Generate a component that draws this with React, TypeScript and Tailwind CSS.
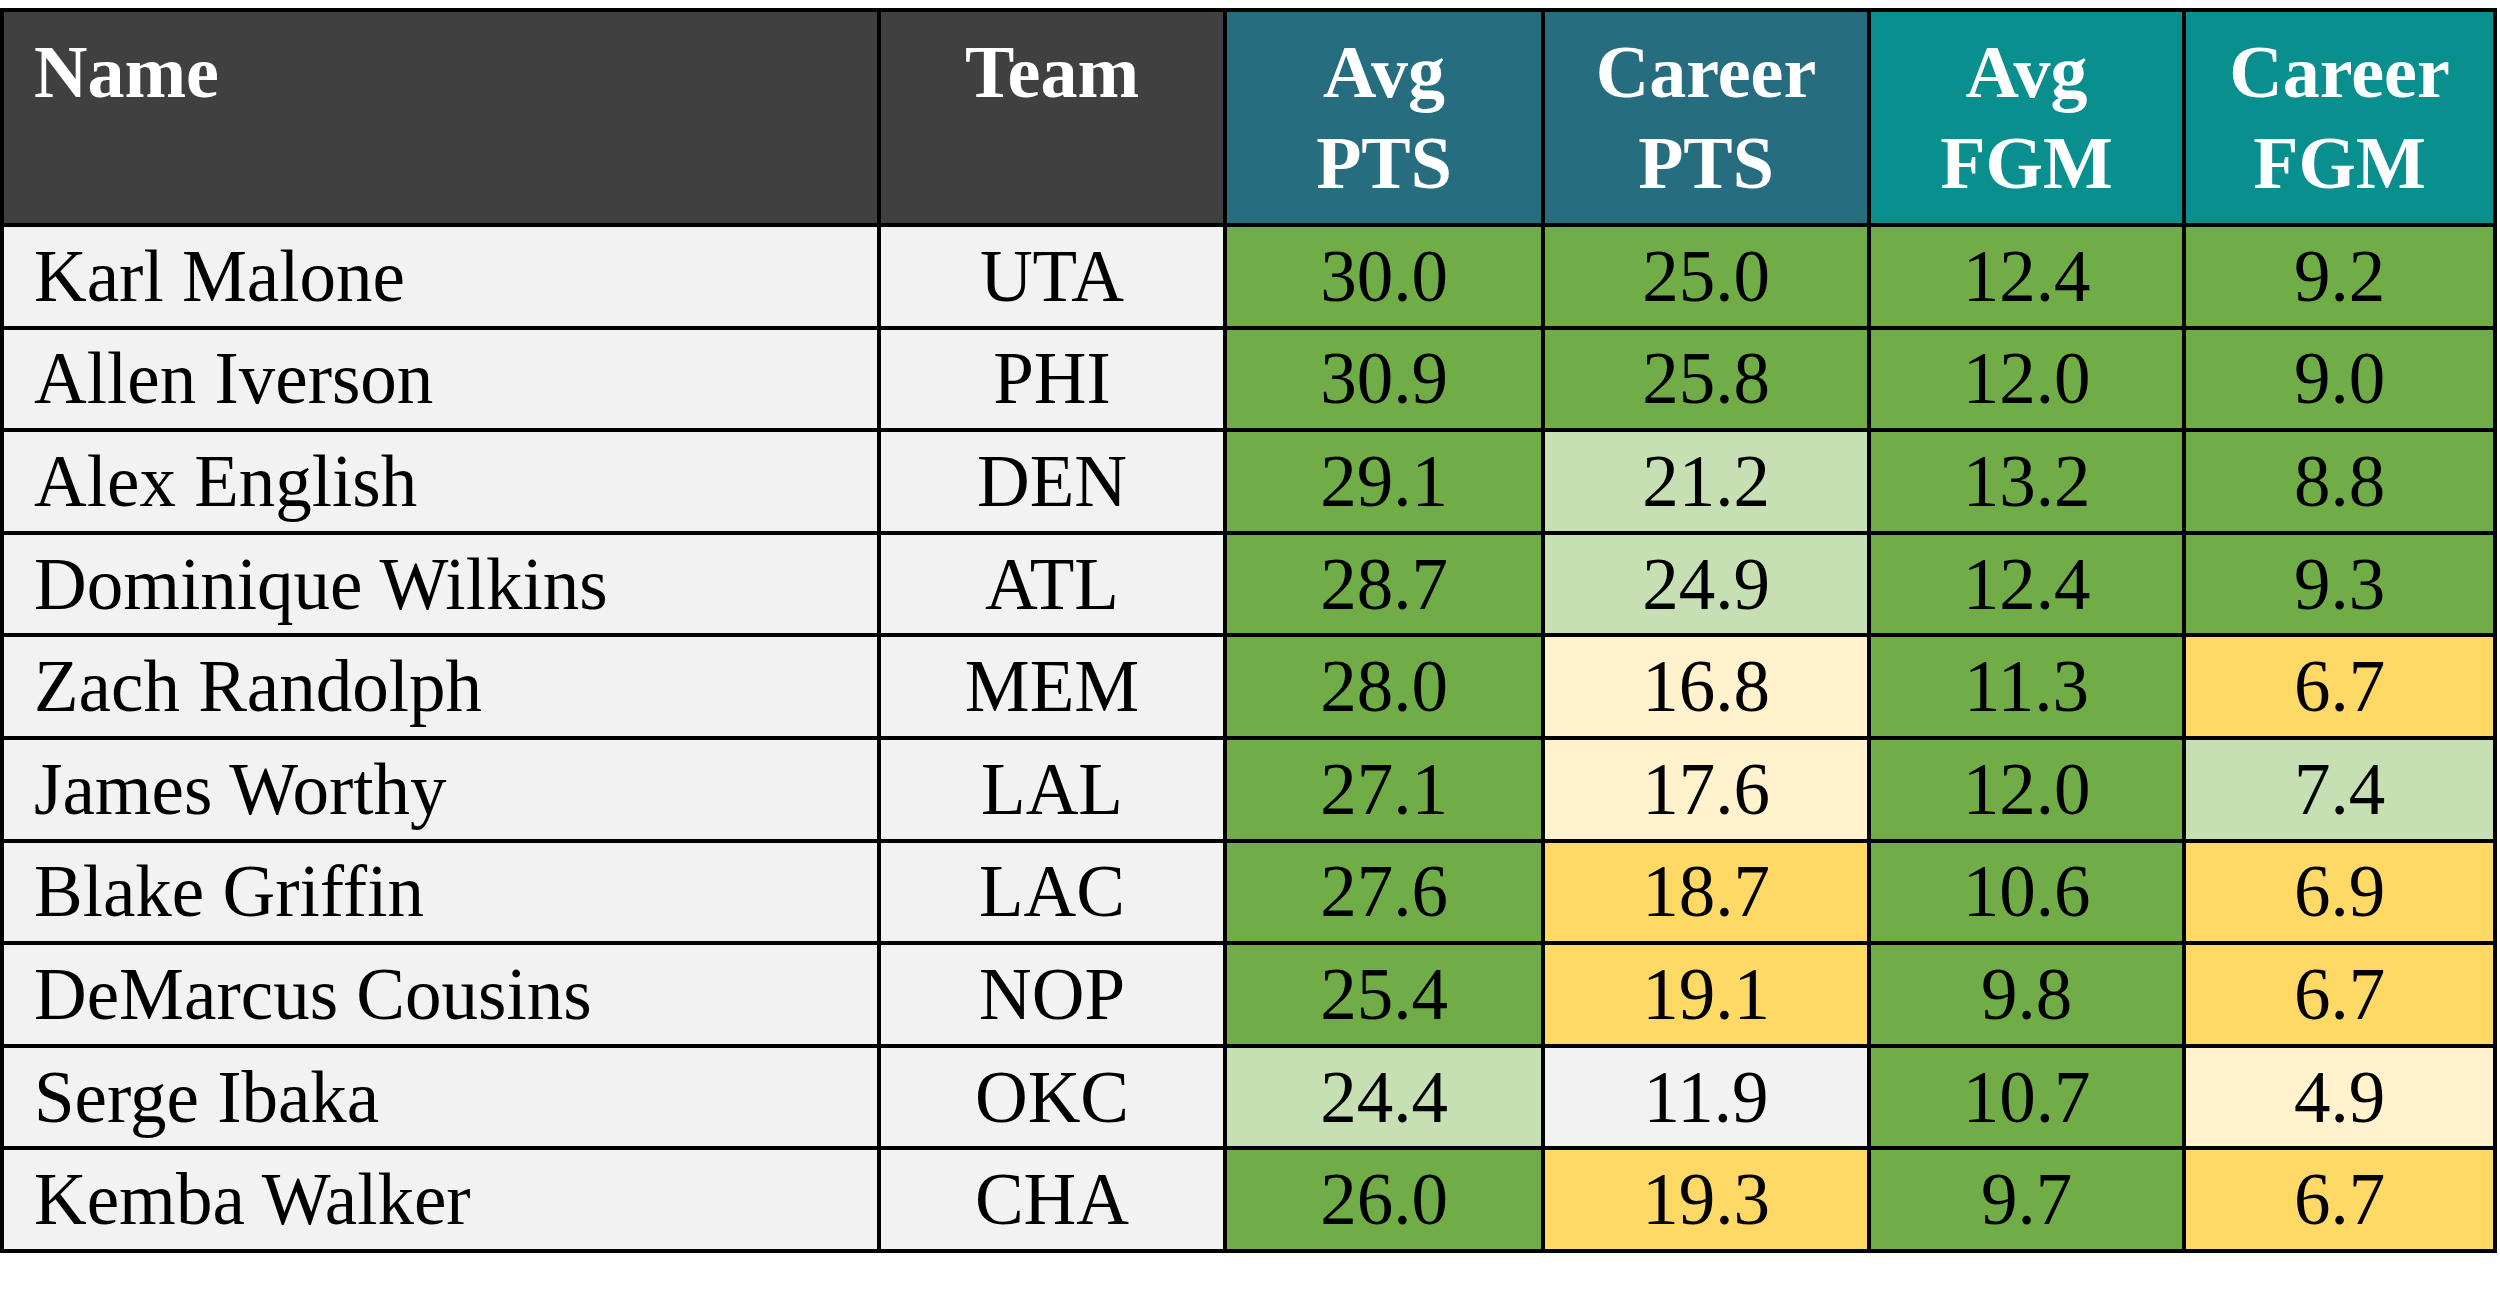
import React from "react";

type C = "G" | "LG" | "LY" | "Y" | "W";

const bg: Record<C, string> = {
  G: "bg-[#70ad47]",
  LG: "bg-[#c6e0b4]",
  LY: "bg-[#fff2cc]",
  Y: "bg-[#ffd966]",
  W: "bg-[#f2f2f2]",
};

const rows: [string, string, [string, C], [string, C], [string, C], [string, C]][] = [
  ["Karl Malone", "UTA", ["30.0", "G"], ["25.0", "G"], ["12.4", "G"], ["9.2", "G"]],
  ["Allen Iverson", "PHI", ["30.9", "G"], ["25.8", "G"], ["12.0", "G"], ["9.0", "G"]],
  ["Alex English", "DEN", ["29.1", "G"], ["21.2", "LG"], ["13.2", "G"], ["8.8", "G"]],
  ["Dominique Wilkins", "ATL", ["28.7", "G"], ["24.9", "LG"], ["12.4", "G"], ["9.3", "G"]],
  ["Zach Randolph", "MEM", ["28.0", "G"], ["16.8", "LY"], ["11.3", "G"], ["6.7", "Y"]],
  ["James Worthy", "LAL", ["27.1", "G"], ["17.6", "LY"], ["12.0", "G"], ["7.4", "LG"]],
  ["Blake Griffin", "LAC", ["27.6", "G"], ["18.7", "Y"], ["10.6", "G"], ["6.9", "Y"]],
  ["DeMarcus Cousins", "NOP", ["25.4", "G"], ["19.1", "Y"], ["9.8", "G"], ["6.7", "Y"]],
  ["Serge Ibaka", "OKC", ["24.4", "LG"], ["11.9", "W"], ["10.7", "G"], ["4.9", "LY"]],
  ["Kemba Walker", "CHA", ["26.0", "G"], ["19.3", "Y"], ["9.7", "G"], ["6.7", "Y"]],
];

const headCls =
  "pt-[15px] text-white font-bold text-[74px] leading-[91px] text-center";

export default function App() {
  return (
    <div
      className="bg-white w-[2500px] h-[1294px] pt-[8px]"
      style={{ fontFamily: '"Liberation Serif", "Times New Roman", serif' }}
    >
      <div className="grid grid-cols-[873px_342px_314px_322px_311px_307px] grid-rows-[211px_repeat(10,1fr)] gap-[4px] p-[4px] bg-black w-[2497px] h-[1245px]">
        <div className={headCls + " bg-[#404040] !text-left pl-[30px]"}>Name</div>
        <div className={headCls + " bg-[#404040]"}>Team</div>
        <div className={headCls + " bg-[#256d7f]"}>
          Avg
          <br />
          PTS
        </div>
        <div className={headCls + " bg-[#256d7f]"}>
          Career
          <br />
          PTS
        </div>
        <div className={headCls + " bg-[#0a8f8f]"}>
          Avg
          <br />
          FGM
        </div>
        <div className={headCls + " bg-[#0a8f8f]"}>
          Career
          <br />
          FGM
        </div>
        {rows.map((r) => (
          <React.Fragment key={r[0]}>
            <div className="bg-[#f2f2f2] flex items-center pl-[30px] text-[73px] text-black leading-none">
              {r[0]}
            </div>
            <div className="bg-[#f2f2f2] flex items-center justify-center text-[73px] text-black leading-none">
              {r[1]}
            </div>
            {[r[2], r[3], r[4], r[5]].map(([v, c], i) => (
              <div
                key={i}
                className={
                  bg[c] +
                  " flex items-center justify-center text-[73px] text-black leading-none"
                }
              >
                {v}
              </div>
            ))}
          </React.Fragment>
        ))}
      </div>
    </div>
  );
}
